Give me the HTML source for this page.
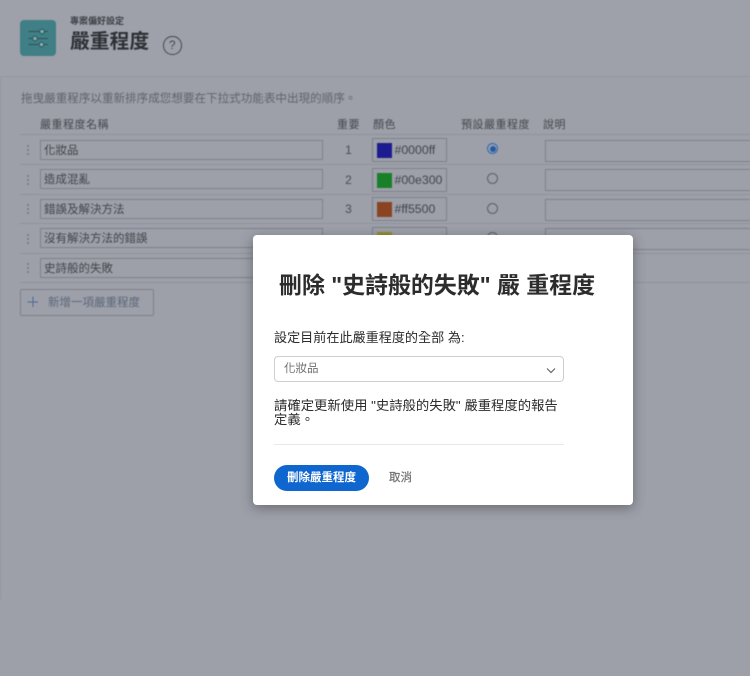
<!DOCTYPE html>
<html lang="zh-Hant">
<head>
<meta charset="utf-8">
<style>
html,body{margin:0;padding:0;width:750px;height:676px;overflow:hidden;background:#9da0a9}
body{font-family:"Liberation Sans","Noto Sans CJK TC",sans-serif;position:relative}
.a{position:absolute;white-space:nowrap}
#bg{position:absolute;left:0;top:0;width:750px;height:676px;overflow:hidden;filter:blur(.45px)}
.line{position:absolute;height:1px;background:#90939c;left:20px;width:730px}
.inp{position:absolute;left:40px;width:278px;height:18px;border:1px solid #7f828b;background:#9da0a9;font-size:11.500px;line-height:20px;color:#42444a;padding-left:3px}
.drag{position:absolute;left:27px;width:3px}
.drag i{display:block;width:2px;height:2px;border-radius:50%;background:#747780;margin:0 0 2px 0}
.num{position:absolute;left:337px;width:23px;text-align:center;font-size:12px;color:#4a4c52}
.col{position:absolute;left:372px;width:73px;height:22px;border:1px solid #7f828b;background:#9da0a9}
.col b{position:absolute;left:4px;top:3.500px;width:15px;height:15.500px}
.col span{position:absolute;left:21.500px;top:3px;font-size:12.300px;line-height:16px;color:#42444a}
.radio{position:absolute;left:487px;width:9px;height:9px;border:1px solid #5c5f66;border-radius:50%}
.desc{position:absolute;left:545px;width:215px;height:20px;border:1px solid #7f828b;background:#9da0a9}
.th{position:absolute;top:118px;font-size:11px;line-height:14px;color:#45474d;letter-spacing:.5px}
#modal{position:absolute;left:253px;top:235px;width:380px;height:270px;background:#fff;border-radius:4px;box-shadow:0 3px 12px rgba(40,42,50,.45)}
</style>
</head>
<body>
<div id="bg">
  <div class="a" style="left:0;top:0;width:750px;height:76px;background:#9ea1aa"></div>
  <div class="a" style="left:0;top:76px;width:750px;height:1px;background:#95989f"></div>
  <div class="a" style="left:0;top:77px;width:1px;height:522px;background:#94979f"></div>

  <div class="a" style="left:20px;top:20px;width:36px;height:36px;border-radius:4px;background:#3f7f85"></div>
  <svg class="a" style="left:20px;top:20px" width="36" height="36" viewBox="0 0 36 36" fill="none" stroke="#2a555b" stroke-width="1">
    <path d="M8.500 11.500H28M8.500 18.500H28M8.500 24.500H28"/>
    <circle cx="22" cy="11.500" r="2.300" fill="#88adb0"/>
    <circle cx="15" cy="18.500" r="2.300" fill="#88adb0"/>
    <circle cx="21.500" cy="24.500" r="2.300" fill="#88adb0"/>
  </svg>

  <div class="a" style="left:70px;top:15px;font-size:9px;line-height:12px;font-weight:700;color:#3f4147">專案偏好設定</div>
  <div class="a" style="left:70px;top:29px;font-size:19.800px;line-height:26px;font-weight:700;color:#2e3035">嚴重程度</div>
  <div class="a" style="left:163px;top:36px;width:16.500px;height:16.500px;border:1px solid #45474d;border-radius:50%;font-size:12px;line-height:17px;text-align:center;color:#45474d">?</div>

  <div class="a" style="left:21px;top:92px;font-size:11.570px;line-height:15px;color:#60636a">拖曳嚴重程序以重新排序成您想要在下拉式功能表中出現的順序。</div>

  <div class="th" style="left:40px">嚴重程度名稱</div>
  <div class="th" style="left:337px">重要</div>
  <div class="th" style="left:373px">顏色</div>
  <div class="th" style="left:461px">預設嚴重程度</div>
  <div class="th" style="left:543px">說明</div>

  <div class="line" style="top:134px"></div>
  <div class="line" style="top:164px"></div>
  <div class="line" style="top:194px"></div>
  <div class="line" style="top:223px"></div>
  <div class="line" style="top:253px"></div>
  <div class="line" style="top:282px"></div>

  <div class="drag" style="top:145px"><i></i><i></i><i></i></div>
  <div class="drag" style="top:175px"><i></i><i></i><i></i></div>
  <div class="drag" style="top:204px"><i></i><i></i><i></i></div>
  <div class="drag" style="top:234px"><i></i><i></i><i></i></div>
  <div class="drag" style="top:263px"><i></i><i></i><i></i></div>

  <div class="inp" style="top:140px">化妝品</div>
  <div class="inp" style="top:169px">造成混亂</div>
  <div class="inp" style="top:199px">錯誤及解決方法</div>
  <div class="inp" style="top:228px">沒有解決方法的錯誤</div>
  <div class="inp" style="top:258px">史詩般的失敗</div>

  <div class="num" style="top:143px">1</div>
  <div class="num" style="top:173px">2</div>
  <div class="num" style="top:202px">3</div>

  <div class="col" style="top:138px"><b style="background:#1c1c90"></b><span>#0000ff</span></div>
  <div class="col" style="top:168px"><b style="background:#188028"></b><span>#00e300</span></div>
  <div class="col" style="top:197px"><b style="background:#8a4422"></b><span>#ff5500</span></div>
  <div class="col" style="top:227px"><b style="background:#948f2c"></b></div>

  <div class="radio" style="top:143px;border-color:#2f68b5;background:#9da0a9"></div>
  <div class="a" style="left:489.500px;top:145.500px;width:6px;height:6px;border-radius:50%;background:#245aa5"></div>
  <div class="radio" style="top:173px"></div>
  <div class="radio" style="top:203px"></div>
  <div class="radio" style="top:232px"></div>

  <div class="desc" style="top:140px"></div>
  <div class="desc" style="top:169px"></div>
  <div class="desc" style="top:199px"></div>
  <div class="desc" style="top:228px"></div>

  <div class="a" style="left:20px;top:289px;width:132px;height:25px;border:1px solid #7f828b;border-radius:2px"></div>
  <svg class="a" style="left:27px;top:296px" width="12" height="12" viewBox="0 0 12 12" stroke="#4b6a92" stroke-width="1"><path d="M6 .500V11M.500 6H11"/></svg>
  <div class="a" style="left:48px;top:296px;font-size:11.500px;line-height:14px;color:#5c6779">新增一項嚴重程度</div>
</div>

<div id="modal">
  <div class="a" style="left:26px;top:35px;font-size:22.950px;line-height:30px;font-weight:700;color:#2c2c2c">刪除 "史詩般的失敗" 嚴 重程度</div>
  <div class="a" style="left:21px;top:94px;font-size:13.100px;line-height:17px;color:#2c2c2c">設定目前在此嚴重程度的全部 為:</div>
  <div class="a" style="left:21px;top:121px;width:288px;height:24px;border:1px solid #cfcfcf;border-radius:4px;background:#fff"></div>
  <div class="a" style="left:31px;top:127px;font-size:11.500px;line-height:15px;color:#707070">化妝品</div>
  <svg class="a" style="left:292px;top:131px" width="12" height="9" viewBox="0 0 12 9" fill="none" stroke="#666" stroke-width="1.200"><path d="M2 2.500L6 6.500L10 2.500"/></svg>
  <div class="a" style="left:21px;top:164px;font-size:13.350px;line-height:14px;color:#2c2c2c">請確定更新使用 "史詩般的失敗" 嚴重程度的報告<br>定義。</div>
  <div class="a" style="left:21px;top:209px;width:290px;height:1px;background:#e8e8e8"></div>
  <div class="a" style="left:21px;top:230px;width:95px;height:26px;border-radius:13px;background:#0f66cf;color:#fff;font-size:11.500px;font-weight:700;line-height:26px;text-align:center">刪除嚴重程度</div>
  <div class="a" style="left:136px;top:235px;font-size:11.500px;line-height:16px;color:#6e6e6e;-webkit-text-stroke:.2px #6e6e6e">取消</div>
</div>
</body>
</html>
